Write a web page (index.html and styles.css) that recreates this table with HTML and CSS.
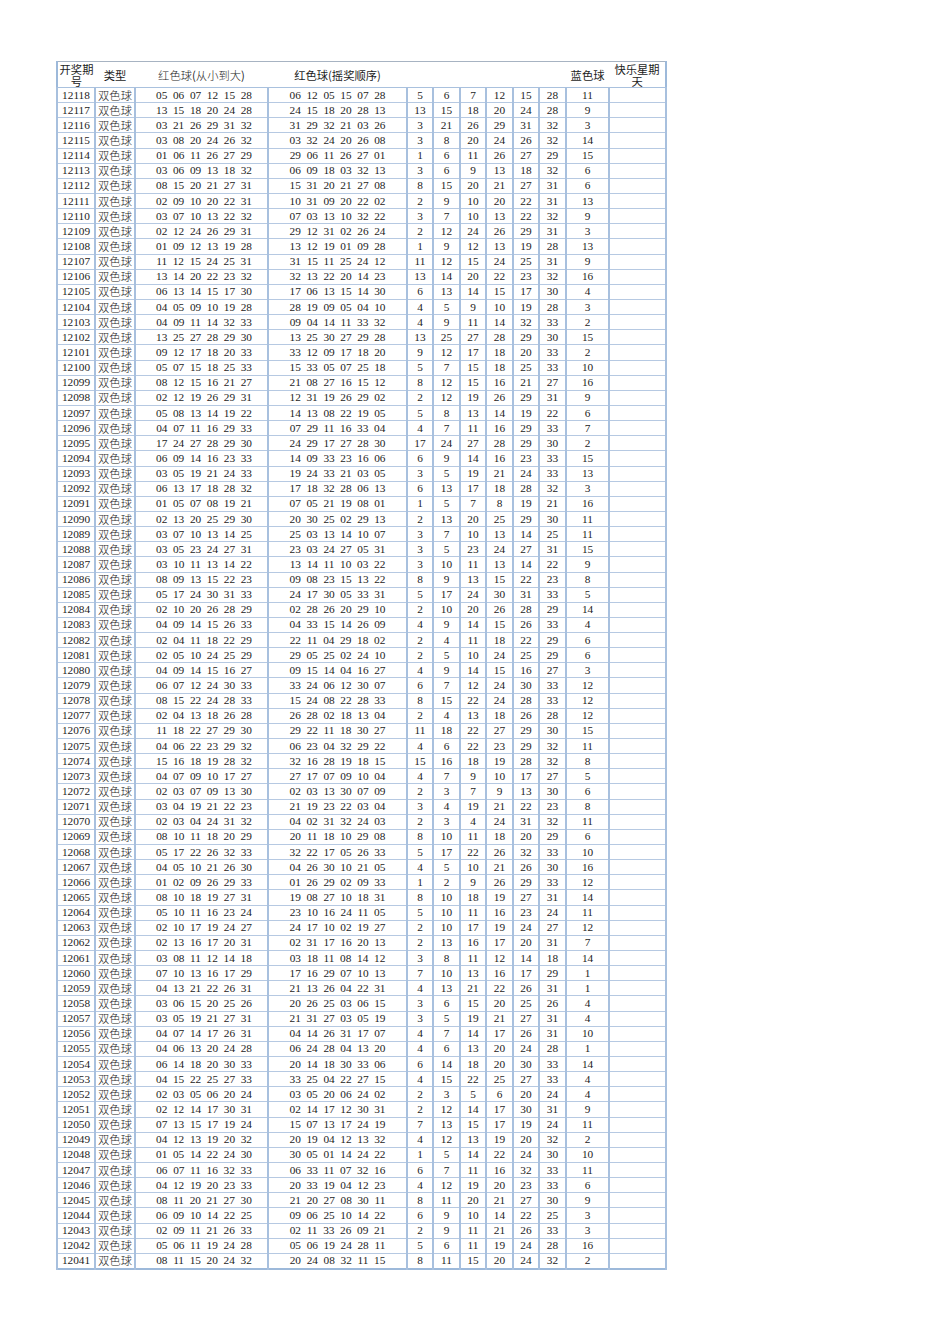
FILE: index.html
```html
<!DOCTYPE html>
<html lang="zh-CN">
<head>
<meta charset="utf-8">
<title>双色球开奖记录</title>
<link rel="stylesheet" href="styles.css">
</head>
<body>
<div class="sheet">
<table class="draws">
<colgroup>
<col class="c-no"><col class="c-type"><col class="c-sorted"><col class="c-order">
<col class="c-b1"><col class="c-b2"><col class="c-b1"><col class="c-b2"><col class="c-b1"><col class="c-b2">
<col class="c-blue"><col class="c-happy">
</colgroup>
<thead>
<tr><th class="cn">开奖期号</th><th class="cn">类型</th><th class="cn"><span class="cn">红色球</span>(<span class="cn">从小到大</span>)</th><th class="cn">红色球(摇奖顺序)</th><th colspan="6"></th><th class="cn">蓝色球</th><th class="cn">快乐星期天</th></tr>
</thead>
<tbody>
<tr><td>12118</td><td class="cn">双色球</td><td class="seq">05 06 07 12 15 28</td><td class="seq">06 12 05 15 07 28</td><td>5</td><td>6</td><td>7</td><td>12</td><td>15</td><td>28</td><td>11</td><td></td></tr>
<tr><td>12117</td><td class="cn">双色球</td><td class="seq">13 15 18 20 24 28</td><td class="seq">24 15 18 20 28 13</td><td>13</td><td>15</td><td>18</td><td>20</td><td>24</td><td>28</td><td>9</td><td></td></tr>
<tr><td>12116</td><td class="cn">双色球</td><td class="seq">03 21 26 29 31 32</td><td class="seq">31 29 32 21 03 26</td><td>3</td><td>21</td><td>26</td><td>29</td><td>31</td><td>32</td><td>3</td><td></td></tr>
<tr><td>12115</td><td class="cn">双色球</td><td class="seq">03 08 20 24 26 32</td><td class="seq">03 32 24 20 26 08</td><td>3</td><td>8</td><td>20</td><td>24</td><td>26</td><td>32</td><td>14</td><td></td></tr>
<tr><td>12114</td><td class="cn">双色球</td><td class="seq">01 06 11 26 27 29</td><td class="seq">29 06 11 26 27 01</td><td>1</td><td>6</td><td>11</td><td>26</td><td>27</td><td>29</td><td>15</td><td></td></tr>
<tr><td>12113</td><td class="cn">双色球</td><td class="seq">03 06 09 13 18 32</td><td class="seq">06 09 18 03 32 13</td><td>3</td><td>6</td><td>9</td><td>13</td><td>18</td><td>32</td><td>6</td><td></td></tr>
<tr><td>12112</td><td class="cn">双色球</td><td class="seq">08 15 20 21 27 31</td><td class="seq">15 31 20 21 27 08</td><td>8</td><td>15</td><td>20</td><td>21</td><td>27</td><td>31</td><td>6</td><td></td></tr>
<tr><td>12111</td><td class="cn">双色球</td><td class="seq">02 09 10 20 22 31</td><td class="seq">10 31 09 20 22 02</td><td>2</td><td>9</td><td>10</td><td>20</td><td>22</td><td>31</td><td>13</td><td></td></tr>
<tr><td>12110</td><td class="cn">双色球</td><td class="seq">03 07 10 13 22 32</td><td class="seq">07 03 13 10 32 22</td><td>3</td><td>7</td><td>10</td><td>13</td><td>22</td><td>32</td><td>9</td><td></td></tr>
<tr><td>12109</td><td class="cn">双色球</td><td class="seq">02 12 24 26 29 31</td><td class="seq">29 12 31 02 26 24</td><td>2</td><td>12</td><td>24</td><td>26</td><td>29</td><td>31</td><td>3</td><td></td></tr>
<tr><td>12108</td><td class="cn">双色球</td><td class="seq">01 09 12 13 19 28</td><td class="seq">13 12 19 01 09 28</td><td>1</td><td>9</td><td>12</td><td>13</td><td>19</td><td>28</td><td>13</td><td></td></tr>
<tr><td>12107</td><td class="cn">双色球</td><td class="seq">11 12 15 24 25 31</td><td class="seq">31 15 11 25 24 12</td><td>11</td><td>12</td><td>15</td><td>24</td><td>25</td><td>31</td><td>9</td><td></td></tr>
<tr><td>12106</td><td class="cn">双色球</td><td class="seq">13 14 20 22 23 32</td><td class="seq">32 13 22 20 14 23</td><td>13</td><td>14</td><td>20</td><td>22</td><td>23</td><td>32</td><td>16</td><td></td></tr>
<tr><td>12105</td><td class="cn">双色球</td><td class="seq">06 13 14 15 17 30</td><td class="seq">17 06 13 15 14 30</td><td>6</td><td>13</td><td>14</td><td>15</td><td>17</td><td>30</td><td>4</td><td></td></tr>
<tr><td>12104</td><td class="cn">双色球</td><td class="seq">04 05 09 10 19 28</td><td class="seq">28 19 09 05 04 10</td><td>4</td><td>5</td><td>9</td><td>10</td><td>19</td><td>28</td><td>3</td><td></td></tr>
<tr><td>12103</td><td class="cn">双色球</td><td class="seq">04 09 11 14 32 33</td><td class="seq">09 04 14 11 33 32</td><td>4</td><td>9</td><td>11</td><td>14</td><td>32</td><td>33</td><td>2</td><td></td></tr>
<tr><td>12102</td><td class="cn">双色球</td><td class="seq">13 25 27 28 29 30</td><td class="seq">13 25 30 27 29 28</td><td>13</td><td>25</td><td>27</td><td>28</td><td>29</td><td>30</td><td>15</td><td></td></tr>
<tr><td>12101</td><td class="cn">双色球</td><td class="seq">09 12 17 18 20 33</td><td class="seq">33 12 09 17 18 20</td><td>9</td><td>12</td><td>17</td><td>18</td><td>20</td><td>33</td><td>2</td><td></td></tr>
<tr><td>12100</td><td class="cn">双色球</td><td class="seq">05 07 15 18 25 33</td><td class="seq">15 33 05 07 25 18</td><td>5</td><td>7</td><td>15</td><td>18</td><td>25</td><td>33</td><td>10</td><td></td></tr>
<tr><td>12099</td><td class="cn">双色球</td><td class="seq">08 12 15 16 21 27</td><td class="seq">21 08 27 16 15 12</td><td>8</td><td>12</td><td>15</td><td>16</td><td>21</td><td>27</td><td>16</td><td></td></tr>
<tr><td>12098</td><td class="cn">双色球</td><td class="seq">02 12 19 26 29 31</td><td class="seq">12 31 19 26 29 02</td><td>2</td><td>12</td><td>19</td><td>26</td><td>29</td><td>31</td><td>9</td><td></td></tr>
<tr><td>12097</td><td class="cn">双色球</td><td class="seq">05 08 13 14 19 22</td><td class="seq">14 13 08 22 19 05</td><td>5</td><td>8</td><td>13</td><td>14</td><td>19</td><td>22</td><td>6</td><td></td></tr>
<tr><td>12096</td><td class="cn">双色球</td><td class="seq">04 07 11 16 29 33</td><td class="seq">07 29 11 16 33 04</td><td>4</td><td>7</td><td>11</td><td>16</td><td>29</td><td>33</td><td>7</td><td></td></tr>
<tr><td>12095</td><td class="cn">双色球</td><td class="seq">17 24 27 28 29 30</td><td class="seq">24 29 17 27 28 30</td><td>17</td><td>24</td><td>27</td><td>28</td><td>29</td><td>30</td><td>2</td><td></td></tr>
<tr><td>12094</td><td class="cn">双色球</td><td class="seq">06 09 14 16 23 33</td><td class="seq">14 09 33 23 16 06</td><td>6</td><td>9</td><td>14</td><td>16</td><td>23</td><td>33</td><td>15</td><td></td></tr>
<tr><td>12093</td><td class="cn">双色球</td><td class="seq">03 05 19 21 24 33</td><td class="seq">19 24 33 21 03 05</td><td>3</td><td>5</td><td>19</td><td>21</td><td>24</td><td>33</td><td>13</td><td></td></tr>
<tr><td>12092</td><td class="cn">双色球</td><td class="seq">06 13 17 18 28 32</td><td class="seq">17 18 32 28 06 13</td><td>6</td><td>13</td><td>17</td><td>18</td><td>28</td><td>32</td><td>3</td><td></td></tr>
<tr><td>12091</td><td class="cn">双色球</td><td class="seq">01 05 07 08 19 21</td><td class="seq">07 05 21 19 08 01</td><td>1</td><td>5</td><td>7</td><td>8</td><td>19</td><td>21</td><td>16</td><td></td></tr>
<tr><td>12090</td><td class="cn">双色球</td><td class="seq">02 13 20 25 29 30</td><td class="seq">20 30 25 02 29 13</td><td>2</td><td>13</td><td>20</td><td>25</td><td>29</td><td>30</td><td>11</td><td></td></tr>
<tr><td>12089</td><td class="cn">双色球</td><td class="seq">03 07 10 13 14 25</td><td class="seq">25 03 13 14 10 07</td><td>3</td><td>7</td><td>10</td><td>13</td><td>14</td><td>25</td><td>11</td><td></td></tr>
<tr><td>12088</td><td class="cn">双色球</td><td class="seq">03 05 23 24 27 31</td><td class="seq">23 03 24 27 05 31</td><td>3</td><td>5</td><td>23</td><td>24</td><td>27</td><td>31</td><td>15</td><td></td></tr>
<tr><td>12087</td><td class="cn">双色球</td><td class="seq">03 10 11 13 14 22</td><td class="seq">13 14 11 10 03 22</td><td>3</td><td>10</td><td>11</td><td>13</td><td>14</td><td>22</td><td>9</td><td></td></tr>
<tr><td>12086</td><td class="cn">双色球</td><td class="seq">08 09 13 15 22 23</td><td class="seq">09 08 23 15 13 22</td><td>8</td><td>9</td><td>13</td><td>15</td><td>22</td><td>23</td><td>8</td><td></td></tr>
<tr><td>12085</td><td class="cn">双色球</td><td class="seq">05 17 24 30 31 33</td><td class="seq">24 17 30 05 33 31</td><td>5</td><td>17</td><td>24</td><td>30</td><td>31</td><td>33</td><td>5</td><td></td></tr>
<tr><td>12084</td><td class="cn">双色球</td><td class="seq">02 10 20 26 28 29</td><td class="seq">02 28 26 20 29 10</td><td>2</td><td>10</td><td>20</td><td>26</td><td>28</td><td>29</td><td>14</td><td></td></tr>
<tr><td>12083</td><td class="cn">双色球</td><td class="seq">04 09 14 15 26 33</td><td class="seq">04 33 15 14 26 09</td><td>4</td><td>9</td><td>14</td><td>15</td><td>26</td><td>33</td><td>4</td><td></td></tr>
<tr><td>12082</td><td class="cn">双色球</td><td class="seq">02 04 11 18 22 29</td><td class="seq">22 11 04 29 18 02</td><td>2</td><td>4</td><td>11</td><td>18</td><td>22</td><td>29</td><td>6</td><td></td></tr>
<tr><td>12081</td><td class="cn">双色球</td><td class="seq">02 05 10 24 25 29</td><td class="seq">29 05 25 02 24 10</td><td>2</td><td>5</td><td>10</td><td>24</td><td>25</td><td>29</td><td>6</td><td></td></tr>
<tr><td>12080</td><td class="cn">双色球</td><td class="seq">04 09 14 15 16 27</td><td class="seq">09 15 14 04 16 27</td><td>4</td><td>9</td><td>14</td><td>15</td><td>16</td><td>27</td><td>3</td><td></td></tr>
<tr><td>12079</td><td class="cn">双色球</td><td class="seq">06 07 12 24 30 33</td><td class="seq">33 24 06 12 30 07</td><td>6</td><td>7</td><td>12</td><td>24</td><td>30</td><td>33</td><td>12</td><td></td></tr>
<tr><td>12078</td><td class="cn">双色球</td><td class="seq">08 15 22 24 28 33</td><td class="seq">15 24 08 22 28 33</td><td>8</td><td>15</td><td>22</td><td>24</td><td>28</td><td>33</td><td>12</td><td></td></tr>
<tr><td>12077</td><td class="cn">双色球</td><td class="seq">02 04 13 18 26 28</td><td class="seq">26 28 02 18 13 04</td><td>2</td><td>4</td><td>13</td><td>18</td><td>26</td><td>28</td><td>12</td><td></td></tr>
<tr><td>12076</td><td class="cn">双色球</td><td class="seq">11 18 22 27 29 30</td><td class="seq">29 22 11 18 30 27</td><td>11</td><td>18</td><td>22</td><td>27</td><td>29</td><td>30</td><td>15</td><td></td></tr>
<tr><td>12075</td><td class="cn">双色球</td><td class="seq">04 06 22 23 29 32</td><td class="seq">06 23 04 32 29 22</td><td>4</td><td>6</td><td>22</td><td>23</td><td>29</td><td>32</td><td>11</td><td></td></tr>
<tr><td>12074</td><td class="cn">双色球</td><td class="seq">15 16 18 19 28 32</td><td class="seq">32 16 28 19 18 15</td><td>15</td><td>16</td><td>18</td><td>19</td><td>28</td><td>32</td><td>8</td><td></td></tr>
<tr><td>12073</td><td class="cn">双色球</td><td class="seq">04 07 09 10 17 27</td><td class="seq">27 17 07 09 10 04</td><td>4</td><td>7</td><td>9</td><td>10</td><td>17</td><td>27</td><td>5</td><td></td></tr>
<tr><td>12072</td><td class="cn">双色球</td><td class="seq">02 03 07 09 13 30</td><td class="seq">02 03 13 30 07 09</td><td>2</td><td>3</td><td>7</td><td>9</td><td>13</td><td>30</td><td>6</td><td></td></tr>
<tr><td>12071</td><td class="cn">双色球</td><td class="seq">03 04 19 21 22 23</td><td class="seq">21 19 23 22 03 04</td><td>3</td><td>4</td><td>19</td><td>21</td><td>22</td><td>23</td><td>8</td><td></td></tr>
<tr><td>12070</td><td class="cn">双色球</td><td class="seq">02 03 04 24 31 32</td><td class="seq">04 02 31 32 24 03</td><td>2</td><td>3</td><td>4</td><td>24</td><td>31</td><td>32</td><td>11</td><td></td></tr>
<tr><td>12069</td><td class="cn">双色球</td><td class="seq">08 10 11 18 20 29</td><td class="seq">20 11 18 10 29 08</td><td>8</td><td>10</td><td>11</td><td>18</td><td>20</td><td>29</td><td>6</td><td></td></tr>
<tr><td>12068</td><td class="cn">双色球</td><td class="seq">05 17 22 26 32 33</td><td class="seq">32 22 17 05 26 33</td><td>5</td><td>17</td><td>22</td><td>26</td><td>32</td><td>33</td><td>10</td><td></td></tr>
<tr><td>12067</td><td class="cn">双色球</td><td class="seq">04 05 10 21 26 30</td><td class="seq">04 26 30 10 21 05</td><td>4</td><td>5</td><td>10</td><td>21</td><td>26</td><td>30</td><td>16</td><td></td></tr>
<tr><td>12066</td><td class="cn">双色球</td><td class="seq">01 02 09 26 29 33</td><td class="seq">01 26 29 02 09 33</td><td>1</td><td>2</td><td>9</td><td>26</td><td>29</td><td>33</td><td>12</td><td></td></tr>
<tr><td>12065</td><td class="cn">双色球</td><td class="seq">08 10 18 19 27 31</td><td class="seq">19 08 27 10 18 31</td><td>8</td><td>10</td><td>18</td><td>19</td><td>27</td><td>31</td><td>14</td><td></td></tr>
<tr><td>12064</td><td class="cn">双色球</td><td class="seq">05 10 11 16 23 24</td><td class="seq">23 10 16 24 11 05</td><td>5</td><td>10</td><td>11</td><td>16</td><td>23</td><td>24</td><td>11</td><td></td></tr>
<tr><td>12063</td><td class="cn">双色球</td><td class="seq">02 10 17 19 24 27</td><td class="seq">24 17 10 02 19 27</td><td>2</td><td>10</td><td>17</td><td>19</td><td>24</td><td>27</td><td>12</td><td></td></tr>
<tr><td>12062</td><td class="cn">双色球</td><td class="seq">02 13 16 17 20 31</td><td class="seq">02 31 17 16 20 13</td><td>2</td><td>13</td><td>16</td><td>17</td><td>20</td><td>31</td><td>7</td><td></td></tr>
<tr><td>12061</td><td class="cn">双色球</td><td class="seq">03 08 11 12 14 18</td><td class="seq">03 18 11 08 14 12</td><td>3</td><td>8</td><td>11</td><td>12</td><td>14</td><td>18</td><td>14</td><td></td></tr>
<tr><td>12060</td><td class="cn">双色球</td><td class="seq">07 10 13 16 17 29</td><td class="seq">17 16 29 07 10 13</td><td>7</td><td>10</td><td>13</td><td>16</td><td>17</td><td>29</td><td>1</td><td></td></tr>
<tr><td>12059</td><td class="cn">双色球</td><td class="seq">04 13 21 22 26 31</td><td class="seq">21 13 26 04 22 31</td><td>4</td><td>13</td><td>21</td><td>22</td><td>26</td><td>31</td><td>1</td><td></td></tr>
<tr><td>12058</td><td class="cn">双色球</td><td class="seq">03 06 15 20 25 26</td><td class="seq">20 26 25 03 06 15</td><td>3</td><td>6</td><td>15</td><td>20</td><td>25</td><td>26</td><td>4</td><td></td></tr>
<tr><td>12057</td><td class="cn">双色球</td><td class="seq">03 05 19 21 27 31</td><td class="seq">21 31 27 03 05 19</td><td>3</td><td>5</td><td>19</td><td>21</td><td>27</td><td>31</td><td>4</td><td></td></tr>
<tr><td>12056</td><td class="cn">双色球</td><td class="seq">04 07 14 17 26 31</td><td class="seq">04 14 26 31 17 07</td><td>4</td><td>7</td><td>14</td><td>17</td><td>26</td><td>31</td><td>10</td><td></td></tr>
<tr><td>12055</td><td class="cn">双色球</td><td class="seq">04 06 13 20 24 28</td><td class="seq">06 24 28 04 13 20</td><td>4</td><td>6</td><td>13</td><td>20</td><td>24</td><td>28</td><td>1</td><td></td></tr>
<tr><td>12054</td><td class="cn">双色球</td><td class="seq">06 14 18 20 30 33</td><td class="seq">20 14 18 30 33 06</td><td>6</td><td>14</td><td>18</td><td>20</td><td>30</td><td>33</td><td>14</td><td></td></tr>
<tr><td>12053</td><td class="cn">双色球</td><td class="seq">04 15 22 25 27 33</td><td class="seq">33 25 04 22 27 15</td><td>4</td><td>15</td><td>22</td><td>25</td><td>27</td><td>33</td><td>4</td><td></td></tr>
<tr><td>12052</td><td class="cn">双色球</td><td class="seq">02 03 05 06 20 24</td><td class="seq">03 05 20 06 24 02</td><td>2</td><td>3</td><td>5</td><td>6</td><td>20</td><td>24</td><td>4</td><td></td></tr>
<tr><td>12051</td><td class="cn">双色球</td><td class="seq">02 12 14 17 30 31</td><td class="seq">02 14 17 12 30 31</td><td>2</td><td>12</td><td>14</td><td>17</td><td>30</td><td>31</td><td>9</td><td></td></tr>
<tr><td>12050</td><td class="cn">双色球</td><td class="seq">07 13 15 17 19 24</td><td class="seq">15 07 13 17 24 19</td><td>7</td><td>13</td><td>15</td><td>17</td><td>19</td><td>24</td><td>11</td><td></td></tr>
<tr><td>12049</td><td class="cn">双色球</td><td class="seq">04 12 13 19 20 32</td><td class="seq">20 19 04 12 13 32</td><td>4</td><td>12</td><td>13</td><td>19</td><td>20</td><td>32</td><td>2</td><td></td></tr>
<tr><td>12048</td><td class="cn">双色球</td><td class="seq">01 05 14 22 24 30</td><td class="seq">30 05 01 14 24 22</td><td>1</td><td>5</td><td>14</td><td>22</td><td>24</td><td>30</td><td>10</td><td></td></tr>
<tr><td>12047</td><td class="cn">双色球</td><td class="seq">06 07 11 16 32 33</td><td class="seq">06 33 11 07 32 16</td><td>6</td><td>7</td><td>11</td><td>16</td><td>32</td><td>33</td><td>11</td><td></td></tr>
<tr><td>12046</td><td class="cn">双色球</td><td class="seq">04 12 19 20 23 33</td><td class="seq">20 33 19 04 12 23</td><td>4</td><td>12</td><td>19</td><td>20</td><td>23</td><td>33</td><td>6</td><td></td></tr>
<tr><td>12045</td><td class="cn">双色球</td><td class="seq">08 11 20 21 27 30</td><td class="seq">21 20 27 08 30 11</td><td>8</td><td>11</td><td>20</td><td>21</td><td>27</td><td>30</td><td>9</td><td></td></tr>
<tr><td>12044</td><td class="cn">双色球</td><td class="seq">06 09 10 14 22 25</td><td class="seq">09 06 25 10 14 22</td><td>6</td><td>9</td><td>10</td><td>14</td><td>22</td><td>25</td><td>3</td><td></td></tr>
<tr><td>12043</td><td class="cn">双色球</td><td class="seq">02 09 11 21 26 33</td><td class="seq">02 11 33 26 09 21</td><td>2</td><td>9</td><td>11</td><td>21</td><td>26</td><td>33</td><td>3</td><td></td></tr>
<tr><td>12042</td><td class="cn">双色球</td><td class="seq">05 06 11 19 24 28</td><td class="seq">05 06 19 24 28 11</td><td>5</td><td>6</td><td>11</td><td>19</td><td>24</td><td>28</td><td>16</td><td></td></tr>
<tr><td>12041</td><td class="cn">双色球</td><td class="seq">08 11 15 20 24 32</td><td class="seq">20 24 08 32 11 15</td><td>8</td><td>11</td><td>15</td><td>20</td><td>24</td><td>32</td><td>2</td><td></td></tr>
</tbody>
</table>
</div>
</body>
</html>
```

FILE: styles.css
```css
html, body {
  margin: 0;
  padding: 0;
  background: #ffffff;
}

body {
  font-family: "Liberation Serif", "Noto Sans CJK SC", serif;
  font-size: 11.3px;
  color: #1c1c1c;
}

.sheet {
  padding: 61px 0 0 56px;
}

.draws {
  border-collapse: collapse;
  table-layout: fixed;
  width: 611px;
  border-left: 2px solid #9db9da;
  border-right: 2px solid #9db9da;
  border-bottom: 2px solid #9db9da;
  border-top: 1px solid #a7b3c2;
}

.c-no { width: 38px; }
.c-type { width: 40px; }
.c-sorted { width: 133px; }
.c-order { width: 139px; }
.c-b1 { width: 26px; }
.c-b2 { width: 27px; }
.c-blue { width: 43px; }
.c-happy { width: 57px; }

.draws th {
  font-weight: normal;
  height: 23px;
  padding: 1px 1px 0;
  line-height: 12px;
  text-align: center;
  vertical-align: middle;
  border-bottom: 1px solid #a9c1de;
  overflow: visible;
}

.draws td {
  height: 14.15px;
  padding: 0;
  line-height: 13px;
  text-align: center;
  vertical-align: middle;
  white-space: nowrap;
  overflow: hidden;
  border-top: 1px solid #b6c9e2;
  border-bottom: 1px solid #b6c9e2;
  border-left: 2px solid #a8c0de;
  border-right: 2px solid #a8c0de;
}

.cn {
  font-family: "Noto Sans CJK SC", sans-serif;
  font-weight: 300;
}

.seq {
  word-spacing: 0.25em;
}

.draws td.seq:nth-child(3) {
  padding-left: 5px;
}
```
